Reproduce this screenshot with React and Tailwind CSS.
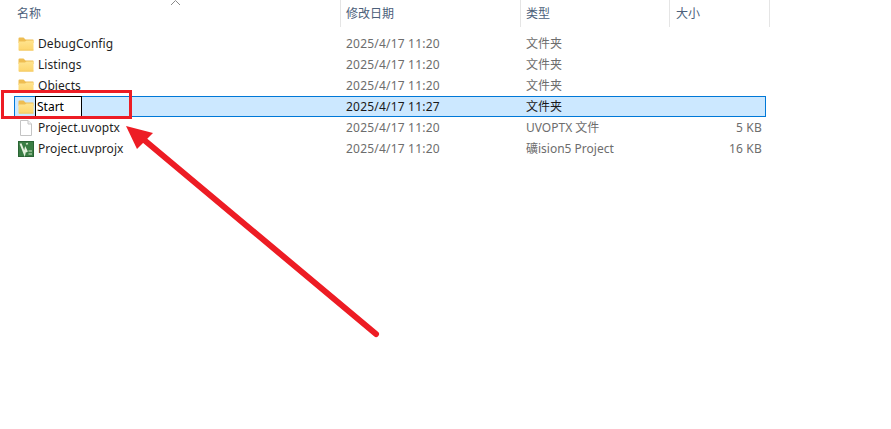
import React from "react";

const rows = [
  { name: "DebugConfig", date: "2025/4/17 11:20", type: "文件夹", size: "", icon: "folder" },
  { name: "Listings", date: "2025/4/17 11:20", type: "文件夹", size: "", icon: "folder" },
  { name: "Objects", date: "2025/4/17 11:20", type: "文件夹", size: "", icon: "folder" },
  { name: "Start", date: "2025/4/17 11:27", type: "文件夹", size: "", icon: "folder", editing: true },
  { name: "Project.uvoptx", date: "2025/4/17 11:20", type: "UVOPTX 文件", size: "5 KB", icon: "file" },
  { name: "Project.uvprojx", date: "2025/4/17 11:20", type: "礦ision5 Project", size: "16 KB", icon: "keil" },
];

const FolderIcon = () => (
  <svg width="16" height="14" viewBox="0 0 16 14" className="shrink-0">
    <defs>
      <linearGradient id="folderBody" x1="0" y1="0" x2="0" y2="1">
        <stop offset="0" stopColor="#ffe48f" />
        <stop offset="1" stopColor="#fdd56c" />
      </linearGradient>
    </defs>
    <path d="M0.5 1.5 Q0.5 0.5 1.5 0.5 H5.5 L7.5 2.5 H15 Q15.5 2.5 15.5 3 V6 H0.5 Z" fill="#eebd52" />
    <path d="M0.5 4.5 H7 L8.5 3.5 H15.5 V13 Q15.5 13.5 15 13.5 H1 Q0.5 13.5 0.5 13 Z" fill="url(#folderBody)" />
    <path d="M1 12.8 H15.5 V13 Q15.5 13.5 15 13.5 H1 Z" fill="#efc45e" />
  </svg>
);

const FileIcon = () => (
  <svg width="16" height="16" viewBox="0 0 16 16" className="shrink-0">
    <path d="M2.5 0.5 H10 L13.5 4 V15.5 H2.5 Z" fill="#fff" stroke="#c4c4c4" />
    <path d="M10 0.5 V4 H13.5" fill="#f2f2f2" stroke="#c4c4c4" />
  </svg>
);

const KeilIcon = () => (
  <svg width="16" height="16" viewBox="0 0 16 16" className="shrink-0">
    <rect x="0.5" y="0.5" width="15" height="15" fill="#3a7d44" stroke="#2a6434" />
    <path d="M2.5 2.5 L6.5 12.5 L7.5 8 L9 11" fill="none" stroke="#e6f2df" strokeWidth="2" />
    <path d="M8 3 L10 2.5" fill="none" stroke="#cfe6c6" strokeWidth="1.5" />
    <path d="M10.5 10 H14 M10.5 13 H14" stroke="#cfe6c6" strokeWidth="1.2" />
  </svg>
);

const icons = { folder: FolderIcon, file: FileIcon, keil: KeilIcon };

const HeaderCell = ({ children, className }) => (
  <div className={`flex h-[27px] items-center border-l border-[#e5e5e5] pl-[5px] pt-px ${className}`}>{children}</div>
);

const Row = ({ row }) => {
  const Icon = icons[row.icon];
  const selected = row.editing;
  return (
    <div
      className={`grid h-[21px] grid-cols-[326px_180px_149px_95px] items-center border ${
        selected ? "border-[#0078d7] bg-[#cce8ff] text-[#1a1a1a]" : "border-transparent text-[#6d6d6d]"
      }`}
    >
      <div className="flex items-center pl-[3px]">
        <div className="flex w-[18px] justify-start">
          <Icon />
        </div>
        {selected ? (
          <div className="-my-px ml-[-1px] flex h-[21px] w-[47px] items-center border border-black bg-white pl-px text-black">{row.name}</div>
        ) : (
          <span className="ml-[2px] tracking-[0.05px] text-[#1f1f1f]">{row.name}</span>
        )}
      </div>
      <div className="pl-[5px] tracking-[0.2px]">{row.date}</div>
      <div className="pl-[5px]">{row.type}</div>
      <div className="pr-[3px] text-right tracking-[0.2px]">{row.size}</div>
    </div>
  );
};

export default function App() {
  return (
    <div className="relative h-[429px] w-[891px] overflow-hidden bg-white font-['Noto_Sans','Noto_Sans_CJK_SC',sans-serif] text-[12px]">
      <div className="flex text-[#4c607a]">
        <div className="flex h-[27px] w-[340px] items-center pl-[17px] pt-px">名称</div>
        <HeaderCell className="w-[180px]">修改日期</HeaderCell>
        <HeaderCell className="w-[149px]">类型</HeaderCell>
        <HeaderCell className="w-[101px] border-r pl-[6px]">大小</HeaderCell>
      </div>
      <div className="ml-[14px] mt-[6px] w-[752px]">
        {rows.map((row) => (
          <Row key={row.name} row={row} />
        ))}
      </div>

      {/* sort chevron */}
      <svg className="absolute left-[170px] top-0" width="11" height="6" viewBox="0 0 11 6">
        <path d="M1 5 L5.5 0.5 L10 5" fill="none" stroke="#8a8a8a" />
      </svg>

      {/* red annotation box */}
      <div className="pointer-events-none absolute left-[1px] top-[90px] h-[29px] w-[131px] border-[3px] border-[#ed1c24]" />

      {/* red arrow */}
      <svg className="pointer-events-none absolute left-0 top-0" width="891" height="429" viewBox="0 0 891 429">
        <path d="M376 334 L143 139" stroke="#ed1c24" strokeWidth="6" strokeLinecap="round" fill="none" />
        <path d="M126 126 L153 133 L137 149 Z" fill="#ed1c24" />
      </svg>
    </div>
  );
}
